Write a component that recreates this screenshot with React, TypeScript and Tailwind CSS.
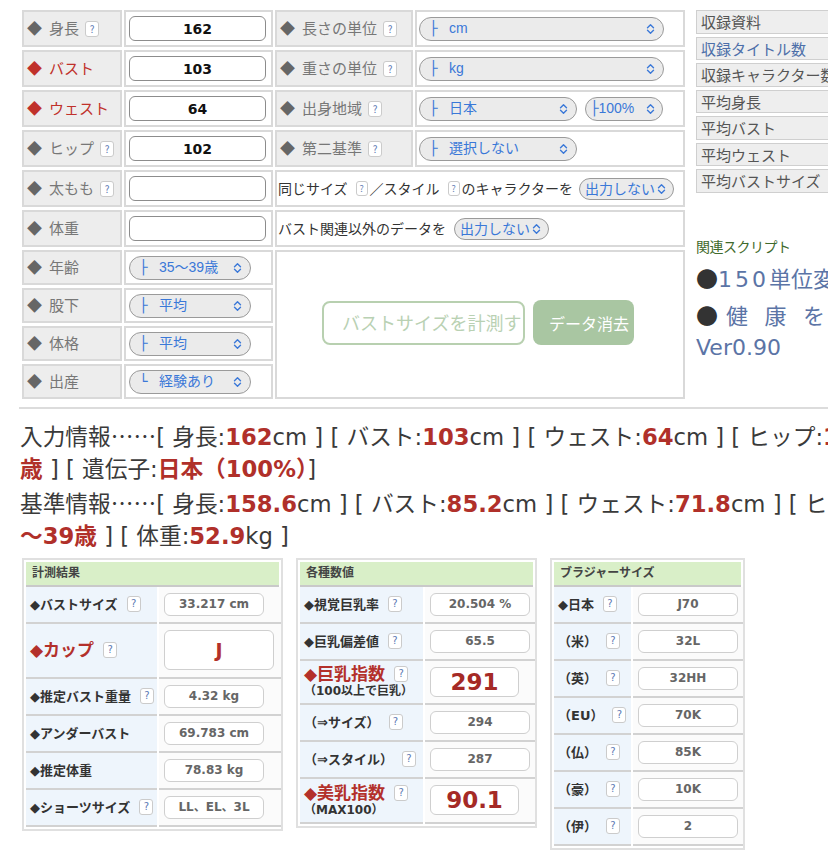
import type { ReactNode } from "react";

// Pill-shaped up/down chevron used by the native-looking selects
function UpDown() {
  return (
    <svg width="9" height="12" viewBox="0 0 9 12" className="shrink-0">
      <path
        d="M1.5 4.8 4.5 1.8 7.5 4.8M1.5 7.2 4.5 10.2 7.5 7.2"
        fill="none"
        stroke="#3a78d8"
        strokeWidth="1.4"
        strokeLinecap="round"
        strokeLinejoin="round"
      />
    </svg>
  );
}

function Q({ small }: { small?: boolean }) {
  return (
    <span
      className={
        small
          ? "inline-flex h-[15px] w-[12px] shrink-0 items-center justify-center rounded-[3px] border border-[#cbcbcb] bg-white text-[9px] leading-none text-[#6a84b8]"
          : "inline-flex h-[16px] w-[14px] shrink-0 items-center justify-center rounded-[3px] border border-[#cbcbcb] bg-white text-[10px] leading-none text-[#5b79b4]"
      }
    >
      ?
    </span>
  );
}

function Pill({ w, mark, label, tight }: { w: string; mark?: string; label: string; tight?: boolean }) {
  return (
    <div
      className={`flex h-[24px] shrink-0 items-center rounded-full border border-[#9a9a9a] bg-[#ebebeb] font-['Liberation_Sans','Noto_Sans_CJK_JP',sans-serif] text-[14px] text-[#3a78d8] ${
        tight ? "pl-[4px] pr-[7px]" : "pl-[9px] pr-[8px]"
      } ${w}`}
    >
      {mark && (
        <span className={`font-['DejaVu_Sans',sans-serif] ${tight ? "" : "w-[20px]"}`}>{mark}</span>
      )}
      <span className="flex-1 whitespace-nowrap">{label}</span>
      <UpDown />
    </div>
  );
}

function SmallPill({ label }: { label: string }) {
  return (
    <div className="flex h-[22px] w-[95px] shrink-0 items-center justify-between rounded-full border border-[#9a9a9a] bg-[#ebebeb] pl-[5px] pr-[7px] text-[14px] text-[#3a78d8]">
      <span>{label}</span>
      <UpDown />
    </div>
  );
}

function Lab({ text, red, q }: { text: string; red?: boolean; q?: boolean }) {
  return (
    <div className="flex items-center border-2 border-[#d9d9d9] bg-[#ededed] pl-[3px] text-[15px]">
      <span className={red ? "text-[#c0312b]" : "text-[#666]"}>◆</span>
      <span className={`ml-[7px] ${red ? "text-[#c0312b]" : "text-[#777]"}`}>{text}</span>
      {q && (
        <span className="ml-[6px] flex">
          <Q />
        </span>
      )}
    </div>
  );
}

function Cell({ children, className = "" }: { children?: ReactNode; className?: string }) {
  return <div className={`flex items-center border-2 border-[#d9d9d9] bg-white ${className}`}>{children}</div>;
}

function NumBox({ v }: { v?: string }) {
  return (
    <div className="flex h-[25px] w-[137px] items-center justify-center rounded-[6px] border border-[#8c8c8c] bg-white pt-[1px] font-['DejaVu_Sans',sans-serif] text-[14px] font-bold text-[#111]">
      {v}
    </div>
  );
}

type Row = {
  label: ReactNode;
  q?: boolean;
  sub?: string;
  value: string;
  h: string;
  big?: "cup" | "idx";
};

function Panel({ title, rows, cols, w }: { title: string; rows: Row[]; cols: string; w: string }) {
  return (
    <div className={`shrink-0 border-2 border-[#e0e0e0] bg-white p-[2px] ${w}`}>
      <div className="flex h-[25px] items-center border-b-2 border-[#c9c9c9] bg-[#d9efc8] pl-[6px] text-[12px] font-bold text-[#444]">
        {title}
      </div>
      <div className={`grid gap-x-[2px] ${cols}`}>
        {rows.map((r, i) => (
          <div key={i} className="contents">
            <div className={`flex flex-col justify-center border-b-2 border-[#d2d2d2] bg-[#eef5fc] pl-[4px] ${r.h}`}>
              <div className="flex items-center">
                {r.label}
                {r.q && (
                  <span className="ml-[9px] flex">
                    <Q />
                  </span>
                )}
              </div>
              {r.sub && <div className="text-[12px] font-bold leading-[15px] text-[#333]">{r.sub}</div>}
            </div>
            <div className={`flex items-center border-b-2 border-[#d2d2d2] bg-[#fbfbfb] pl-[5px] ${r.h}`}>
              {r.big === "cup" ? (
                <div className="flex h-[40px] w-[110px] items-center justify-center rounded-[6px] border border-[#cfcfcf] bg-white text-[19px] font-bold text-[#b3302b]">
                  {r.value}
                </div>
              ) : r.big === "idx" ? (
                <div className="flex h-[30px] w-[89px] items-center justify-center rounded-[6px] border border-[#cfcfcf] bg-white text-[23px] font-bold text-[#a52a26]">
                  {r.value}
                </div>
              ) : (
                <div className="flex h-[23px] w-[100px] items-center justify-center rounded-[6px] border border-[#cfcfcf] bg-white text-[12px] font-bold text-[#666]">
                  {r.value}
                </div>
              )}
            </div>
          </div>
        ))}
      </div>
    </div>
  );
}

const L = ({ t }: { t: string }) => <span className="text-[13px] font-bold text-[#333]">{t}</span>;
const LR = ({ t }: { t: string }) => <span className="text-[17px] font-bold leading-[20px] text-[#b3302b]">{t}</span>;

const P1: Row[] = [
  { label: <L t="◆バストサイズ" />, q: true, value: "33.217 cm", h: "h-[37px]" },
  { label: <LR t="◆カップ" />, q: true, value: "J", h: "h-[55px]", big: "cup" },
  { label: <L t="◆推定バスト重量" />, q: true, value: "4.32 kg", h: "h-[37px]" },
  { label: <L t="◆アンダーバスト" />, value: "69.783 cm", h: "h-[37px]" },
  { label: <L t="◆推定体重" />, value: "78.83 kg", h: "h-[37px]" },
  { label: <L t="◆ショーツサイズ" />, q: true, value: "LL、EL、3L", h: "h-[37px]" },
];

const P2: Row[] = [
  { label: <L t="◆視覚巨乳率" />, q: true, value: "20.504 %", h: "h-[37px]" },
  { label: <L t="◆巨乳偏差値" />, q: true, value: "65.5", h: "h-[37px]" },
  { label: <LR t="◆巨乳指数" />, q: true, sub: "（100以上で巨乳）", value: "291", h: "h-[44px]", big: "idx" },
  { label: <L t="（⇒サイズ）" />, q: true, value: "294", h: "h-[37px]" },
  { label: <L t="（⇒スタイル）" />, q: true, value: "287", h: "h-[37px]" },
  { label: <LR t="◆美乳指数" />, q: true, sub: "（MAX100）", value: "90.1", h: "h-[45px]", big: "idx" },
];

const P3: Row[] = [
  { label: <L t="◆日本" />, q: true, value: "J70", h: "h-[37px]" },
  { label: <L t="（米）" />, q: true, value: "32L", h: "h-[37px]" },
  { label: <L t="（英）" />, q: true, value: "32HH", h: "h-[37px]" },
  { label: <L t="（EU）" />, q: true, value: "70K", h: "h-[37px]" },
  { label: <L t="（仏）" />, q: true, value: "85K", h: "h-[37px]" },
  { label: <L t="（豪）" />, q: true, value: "10K", h: "h-[37px]" },
  { label: <L t="（伊）" />, q: true, value: "2", h: "h-[37px]" },
];

const SIDE = ["収録資料", "収録タイトル数", "収録キャラクター数", "平均身長", "平均バスト", "平均ウェスト", "平均バストサイズ"];

function R({ children }: { children: ReactNode }) {
  return <span className="font-bold text-[#b0302a]">{children}</span>;
}

// CJK-style centred ellipsis
const Dots = () => <span className="font-['Noto_Sans_CJK_JP',sans-serif]">……</span>;

export default function App() {
  return (
    <div className="h-[859px] w-[828px] overflow-hidden bg-white font-['Noto_Sans_CJK_JP',sans-serif] text-[#333]">
      <div className="w-[1100px]">
        {/* input form + side menu */}
        <div className="flex items-start pl-[22px] pt-[10px]">
          <div className="grid grid-cols-[100px_149px_138px_270px] grid-rows-[repeat(6,37px)_repeat(4,35px)] gap-x-[2px] gap-y-[3px]">
            <Lab text="身長" q />
            <Cell className="pl-[3px]">
              <NumBox v="162" />
            </Cell>
            <Lab text="長さの単位" q />
            <Cell className="pl-[2px]">
              <Pill w="w-[245px]" mark="├" label="cm" />
            </Cell>

            <Lab text="バスト" red />
            <Cell className="pl-[3px]">
              <NumBox v="103" />
            </Cell>
            <Lab text="重さの単位" q />
            <Cell className="pl-[2px]">
              <Pill w="w-[245px]" mark="├" label="kg" />
            </Cell>

            <Lab text="ウェスト" red />
            <Cell className="pl-[3px]">
              <NumBox v="64" />
            </Cell>
            <Lab text="出身地域" q />
            <Cell className="gap-[8px] pl-[2px]">
              <Pill w="w-[158px]" mark="├" label="日本" />
              <Pill w="w-[78px]" mark="├" label="100%" tight />
            </Cell>

            <Lab text="ヒップ" q />
            <Cell className="pl-[3px]">
              <NumBox v="102" />
            </Cell>
            <Lab text="第二基準" q />
            <Cell className="pl-[2px]">
              <Pill w="w-[158px]" mark="├" label="選択しない" />
            </Cell>

            <Lab text="太もも" q />
            <Cell className="pl-[3px]">
              <NumBox />
            </Cell>
            <Cell className="col-span-2 pl-[1px] text-[14px] text-[#333]">
              同じサイズ
              <span className="ml-[8px] mr-[2px] flex">
                <Q small />
              </span>
              ／スタイル
              <span className="ml-[8px] mr-[2px] flex">
                <Q small />
              </span>
              のキャラクターを
              <span className="ml-[6px] flex">
                <SmallPill label="出力しない" />
              </span>
            </Cell>

            <Lab text="体重" />
            <Cell className="pl-[3px]">
              <NumBox />
            </Cell>
            <Cell className="col-span-2 pl-[1px] text-[14px] text-[#333]">
              バスト関連以外のデータを
              <span className="ml-[8px] flex">
                <SmallPill label="出力しない" />
              </span>
            </Cell>

            <Lab text="年齢" />
            <Cell className="pl-[3px]">
              <Pill w="w-[122px]" mark="├" label="35〜39歳" />
            </Cell>
            <Cell className="col-span-2 row-span-4 justify-center gap-[8px] pb-[4px] pr-[4px]">
              <div className="flex h-[44px] w-[203px] shrink-0 items-center overflow-hidden whitespace-nowrap rounded-[8px] border-2 border-[#b8d0b0] pl-[18px] text-[18px] text-[#b9d1b3]">
                バストサイズを計測する
              </div>
              <div className="flex h-[45px] w-[101px] shrink-0 items-center rounded-[8px] bg-[#a9c6a2] pl-[16px] text-[16px] text-white">
                データ消去
              </div>
            </Cell>

            <Lab text="股下" />
            <Cell className="pl-[3px]">
              <Pill w="w-[122px]" mark="├" label="平均" />
            </Cell>

            <Lab text="体格" />
            <Cell className="pl-[3px]">
              <Pill w="w-[122px]" mark="├" label="平均" />
            </Cell>

            <Lab text="出産" />
            <Cell className="pl-[3px]">
              <Pill w="w-[122px]" mark="└" label="経験あり" />
            </Cell>
          </div>

          <div className="ml-[11px] w-[220px] shrink-0">
            <div className="flex flex-col gap-[3px]">
              {SIDE.map((s, i) => (
                <div
                  key={s}
                  className={`h-[23.5px] border border-[#cfcfcf] bg-[#eeeeee] pl-[4px] text-[15px] leading-[21px] ${
                    i === 1 ? "text-[#4d6fa9]" : "text-[#555]"
                  }`}
                >
                  {s}
                </div>
              ))}
            </div>
            <div className="mt-[44px] text-[14px] leading-[18px] tracking-[-0.5px] text-[#3f6a2c]">関連スクリプト</div>
            <div className="mt-[5px] whitespace-nowrap font-['DejaVu_Sans','Noto_Sans_CJK_JP',sans-serif] text-[22px] leading-[34px] text-[#5b74a6]">
              <span className="font-['Noto_Sans_CJK_JP',sans-serif] text-[#333]">●</span>
              <span className="tracking-[3px]">150</span>単位変換
            </div>
            <div className="whitespace-nowrap text-[22px] leading-[34px] text-[#5b74a6]">
              <span className="text-[#333]">●</span>
              <span className="ml-[8px] tracking-[16.5px]">健康を測定</span>
            </div>
            <div className="whitespace-nowrap font-['DejaVu_Sans',sans-serif] text-[22px] leading-[34px] text-[#5b74a6]">
              Ver0.90
            </div>
          </div>
        </div>

        <div className="ml-[19px] mt-[8px] h-[2px] bg-[#dcdcdc]" />

        {/* summary lines */}
        <div className="ml-[20px] mt-[10px] whitespace-nowrap font-['DejaVu_Sans','Noto_Sans_CJK_JP',sans-serif] text-[22.7px] leading-[33.7px] text-[#3a3a3a]">
          <div className="h-[33.7px]">
            入力情報<Dots />[ 身長:<R>162</R>cm ] [ バスト:<R>103</R>cm ] [ ウェスト:<R>64</R>cm ] [ ヒップ:<R>102</R>cm ] [ 年齢:
            <R>35〜39</R>
          </div>
          <div className="h-[33.7px]">
            <R>歳</R> ] [ 遺伝子:<R>日本（100%）</R>]
          </div>
          <div className="h-[33.7px]">
            基準情報<Dots />[ 身長:<R>158.6</R>cm ] [ バスト:<R>85.2</R>cm ] [ ウェスト:<R>71.8</R>cm ] [ ヒップ:<R>89.4</R>cm ] [ 年齢:
            <R>35</R>
          </div>
          <div className="h-[33.7px]">
            <R>〜39歳</R> ] [ 体重:<R>52.9</R>kg ]
          </div>
        </div>

        {/* result panels */}
        <div className="ml-[22px] mt-[4px] flex items-start gap-[13px] font-['DejaVu_Sans','Noto_Sans_CJK_JP',sans-serif]">
          <Panel title="計測結果" rows={P1} cols="grid-cols-[131px_122px]" w="w-[261px]" />
          <Panel title="各種数値" rows={P2} cols="grid-cols-[123px_110px]" w="w-[241px]" />
          <Panel title="ブラジャーサイズ" rows={P3} cols="grid-cols-[77px_110px]" w="w-[195px]" />
        </div>
      </div>
    </div>
  );
}
